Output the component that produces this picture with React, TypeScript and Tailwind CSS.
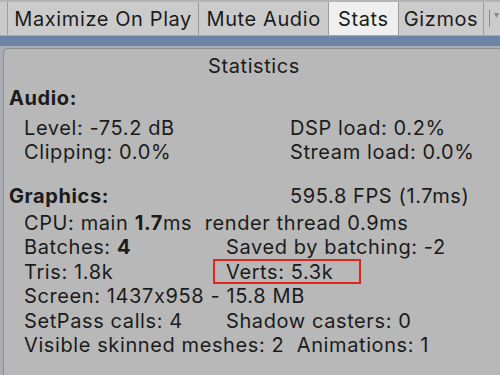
import React from 'react';

const tabs = [
  { label: 'Maximize On Play', w: 'w-[192px]', active: false },
  { label: 'Mute Audio', w: 'w-[130px]', active: false },
  { label: 'Stats', w: 'w-[70px]', active: true },
  { label: 'Gizmos', w: 'w-[86px]', active: false },
];

export default function App() {
  return (
    <div
      className="w-[500px] h-[375px] overflow-hidden bg-[#cbcbcb] text-[#1b1b1b] tracking-[0.6px] [font-feature-settings:'calt'_0]"
      style={{ fontFamily: 'Inter, "Noto Sans", sans-serif' }}
    >
      {/* toolbar */}
      <div className="h-[36px] flex border-t-2 border-[#b4b4b4] border-b border-b-[#a8a8a8] bg-[#cbcbcb]">
        <div className="w-[8px] border-r border-[#9c9c9c]" />
        {tabs.map((t) => (
          <div
            key={t.label}
            className={`${t.w} flex items-center justify-center text-[20px] border-r border-[#9c9c9c] ${t.active ? 'bg-[#efefef]' : ''}`}
          >
            {t.label}
          </div>
        ))}
        <div className="flex items-center pl-[5px]">
          <div className="w-px h-[17px] bg-[#8a8a8a]" />
          <span className="ml-[4px] -mt-[8px] text-[10px] text-[#888]">▾</span>
        </div>
      </div>

      {/* blue strip */}
      <div className="h-[10px] bg-[#6c84a8]" />

      {/* stats panel */}
      <div className="h-[330px] bg-[#a9adb4] pl-[3px] pt-[2px]">
        <div className="h-full bg-[#b8b8b8] rounded-tl-[5px] border-l border-t border-[#8d8d8d] text-[20px] leading-[24.4px]">
          <div className="text-center pt-[5px] pl-[4px]">Statistics</div>

          <div className="pl-[5px] pt-[8px] font-bold">Audio:</div>
          <div className="flex pt-[5px]">
            <div className="pl-[20px] w-[286px]">
              <div>Level: -75.2 dB</div>
              <div>Clipping: 0.0%</div>
            </div>
            <div>
              <div>DSP load: 0.2%</div>
              <div>Stream load: 0.0%</div>
            </div>
          </div>

          <div className="flex pt-[19px]">
            <div className="pl-[5px] w-[286px] font-bold">Graphics:</div>
            <div>595.8 FPS (1.7ms)</div>
          </div>

          <div className="pl-[20px] pt-[3px]">
            <div className="whitespace-pre">
              CPU: main <b>1.7</b>ms{'  '}render thread 0.9ms
            </div>
            <div className="grid grid-cols-[202px_1fr]">
              <div>
                Batches: <b>4</b>
              </div>
              <div>Saved by batching: -2</div>
              <div>Tris: 1.8k</div>
              <div className="relative">
                Verts: 5.3k
                <div className="absolute left-[-13px] top-[-1px] w-[148px] h-[25px] border-2 border-[#e5231b]" />
              </div>
            </div>
            <div>Screen: 1437x958 - 15.8 MB</div>
            <div className="grid grid-cols-[202px_1fr]">
              <div>SetPass calls: 4</div>
              <div>Shadow casters: 0</div>
            </div>
            <div className="whitespace-pre">Visible skinned meshes: 2{'  '}Animations: 1</div>
          </div>
        </div>
      </div>
    </div>
  );
}
